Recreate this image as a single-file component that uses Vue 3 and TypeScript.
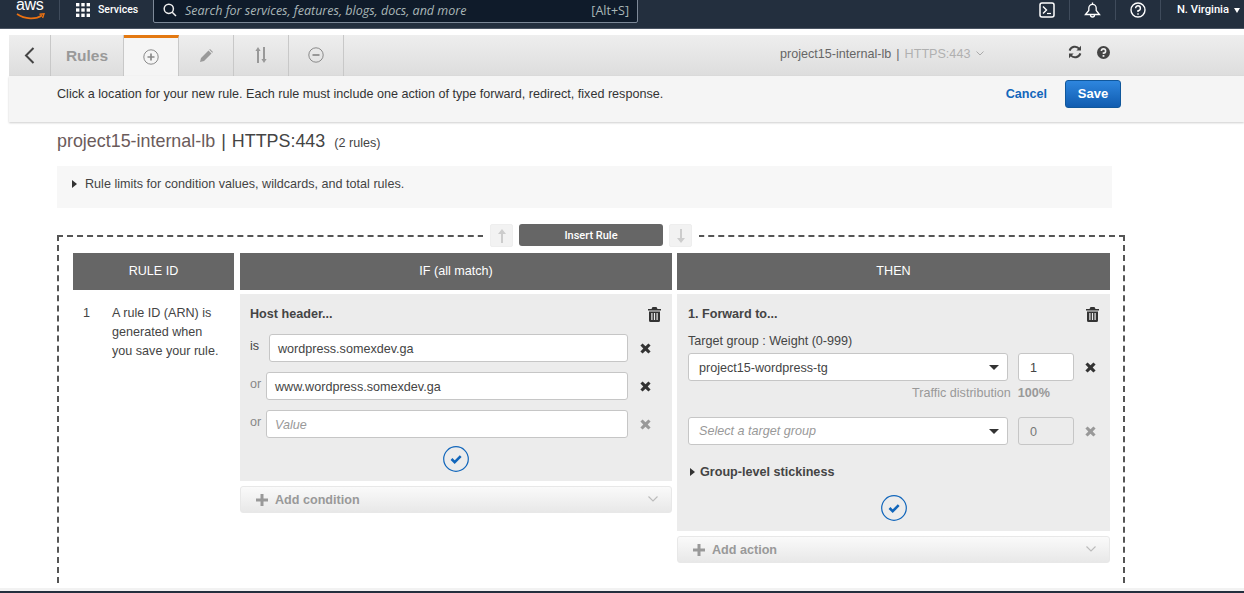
<script setup lang="ts">
const rows = [
  { label: 'is', value: 'wordpress.somexdev.ga', first: true, empty: false },
  { label: 'or', value: 'www.wordpress.somexdev.ga', first: false, empty: false },
  { label: 'or', value: 'Value', first: false, empty: true }
];
</script>

<template>
  <div class="page">
    <header class="nav">
      <div class="logo">
        <span class="logo-text">aws</span>
        <svg class="smile" width="30" height="7" viewBox="0 0 30 7"><path d="M1 1C9 6.5 20 6.5 26 2.5" fill="none" stroke="#ec7211" stroke-width="1.7" /><path d="M23.5 1.2L28 .8 26.6 5" fill="none" stroke="#ec7211" stroke-width="1.4" /></svg>
      </div>
      <div class="nav-sep sep-logo"></div>
      <svg class="grid-icon" width="14" height="14" viewBox="0 0 14 14" fill="#fff">
        <rect x="0" y="0" width="3.4" height="3.4" /><rect x="5.3" y="0" width="3.4" height="3.4" /><rect x="10.6" y="0" width="3.4" height="3.4" />
        <rect x="0" y="5.3" width="3.4" height="3.4" /><rect x="5.3" y="5.3" width="3.4" height="3.4" /><rect x="10.6" y="5.3" width="3.4" height="3.4" />
        <rect x="0" y="10.6" width="3.4" height="3.4" /><rect x="5.3" y="10.6" width="3.4" height="3.4" /><rect x="10.6" y="10.6" width="3.4" height="3.4" />
      </svg>
      <span class="services">Services</span>
      <div class="search">
        <svg width="14" height="14" viewBox="0 0 14 14" fill="none" stroke="#eee" stroke-width="1.5"><circle cx="5.8" cy="5.8" r="4.6" /><path d="M9.2 9.2L13 13" /></svg>
        <span class="search-text">Search for services, features, blogs, docs, and more</span>
        <span class="search-key">[Alt+S]</span>
      </div>
      <div class="nav-right">
        <svg class="nav-icon" width="16" height="16" viewBox="0 0 16 16" fill="none" stroke="#fff"><rect x="1" y="1" width="14" height="14" rx="2" stroke-width="1.5" /><path d="M4 4.5L7.5 8 4 11.5" stroke-width="1.4" /><path d="M8 11.5h4" stroke-width="1.2" /></svg>
        <div class="nav-sep"></div>
        <svg class="nav-icon" width="17" height="17" viewBox="0 0 17 17" fill="none" stroke="#fff" stroke-width="1.3"><path d="M1.5 12.5L4.8 8.5V6a3.7 3.7 0 0 1 7.4 0v2.5l3.3 4z" /><path d="M6.5 13a2 2 0 0 0 4 0" /><path d="M8.5 .5v2" /></svg>
        <div class="nav-sep"></div>
        <svg class="nav-icon" width="16" height="16" viewBox="0 0 16 16" fill="none" stroke="#fff" stroke-width="1.4"><circle cx="8" cy="8" r="7" /><path d="M5.6 6.2A2.4 2.4 0 1 1 8 8.6v1.4" /><path d="M8 11.2v1.5" /></svg>
        <div class="nav-sep"></div>
        <span class="region">N. Virginia</span>
        <span class="region-caret"></span>
      </div>
    </header>

    <div class="top-gap"></div>

    <div class="toolbar">
      <button class="back">
        <svg width="11" height="17" viewBox="0 0 11 17" fill="none" stroke="#444" stroke-width="2"><path d="M9.5 1L2 8.5 9.5 16" /></svg>
      </button>
      <div class="tab-rules">Rules</div>
      <div class="tab active">
        <svg width="16" height="16" viewBox="0 0 16 16" fill="none" stroke="#8a8a8a" stroke-width="1"><circle cx="8" cy="8" r="7.2" /><path d="M8 4.5v7M4.5 8h7" stroke-width="1.7" /></svg>
      </div>
      <div class="tab">
        <svg width="13" height="13" viewBox="0 0 13 13" fill="#999"><path d="M0 13l1-4L8.5 1.5l3 3L4 12zM9.3.7l.7-.7 3 3-.7.7z" /></svg>
      </div>
      <div class="tab">
        <svg width="12" height="16" viewBox="0 0 12 16" fill="#999"><path d="M3 0L.4 4H2v12h2V4h1.6zM9 16l2.6-4H10V0H8v12H6.4z" /></svg>
      </div>
      <div class="tab">
        <svg width="16" height="16" viewBox="0 0 16 16" fill="none" stroke="#8a8a8a" stroke-width="1"><circle cx="8" cy="8" r="7.2" /><path d="M4.5 8h7" stroke-width="1.7" /></svg>
      </div>
      <div class="lb-name">
        <span>project15-internal-lb</span><span class="lb-bar">|</span><span class="lb-port">HTTPS:443</span>
        <svg width="8" height="5" viewBox="0 0 8 5" fill="none" stroke="#aaa"><path d="M.5 .5L4 4 7.5 .5" /></svg>
      </div>
      <svg class="refresh" width="14" height="14" viewBox="0 0 14 14" fill="none" stroke="#444" stroke-width="2"><path d="M1.6 5.6A5.6 5.6 0 0 1 11.4 4" /><path d="M12.4 8.4A5.6 5.6 0 0 1 2.6 10" /><path d="M13 .8v4.6H8.4z" fill="#444" stroke="none" /><path d="M1 13.2V8.6h4.6z" fill="#444" stroke="none" /></svg>
      <svg class="help" width="13" height="13" viewBox="0 0 13 13"><circle cx="6.5" cy="6.5" r="6.5" fill="#444" /><path d="M4.4 5a2.1 2.1 0 1 1 2.1 2.1v1" fill="none" stroke="#eee" stroke-width="1.6" /><rect x="5.6" y="9" width="1.8" height="1.8" fill="#eee" /></svg>
    </div>

    <div class="subbar">
      <span class="hint">Click a location for your new rule. Each rule must include one action of type forward, redirect, fixed response.</span>
      <a class="cancel">Cancel</a>
      <button class="save">Save</button>
    </div>

    <main class="main">
      <h2 class="title">project15-internal-lb<span class="title-bar">|</span><span class="title-port">HTTPS:443</span><small>(2 rules)</small></h2>

      <div class="limits"><span class="caret-right"></span>Rule limits for condition values, wildcards, and total rules.</div>

      <div class="rule-box">
        <div class="insert">
          <button class="arrow-btn">
            <svg width="10" height="14" viewBox="0 0 10 14" fill="#ccc"><path d="M5 0L9 5H6v9H4V5H1z" /></svg>
          </button>
          <div class="insert-btn">Insert Rule</div>
          <button class="arrow-btn">
            <svg width="10" height="14" viewBox="0 0 10 14" fill="#ccc"><path d="M5 14L1 9h3V0h2v9h3z" /></svg>
          </button>
        </div>

        <div class="rule-grid">
          <div class="col-head id-head">RULE ID</div>
          <div class="col-head">IF (all match)</div>
          <div class="col-head">THEN</div>

          <div class="id-cell">
            <span class="id-num">1</span>
            <span class="id-text">A rule ID (ARN) is generated when you save your rule.</span>
          </div>

          <div>
            <section class="panel if-panel">
              <div class="panel-head">
                <span>Host header...</span>
                <svg class="trash" width="13" height="15" viewBox="0 0 13 15" fill="#333"><path d="M4.5 0h4l1 2H13v1.6H0V2h3.500zM1 4.500h11V13.500a1.500 1.500 0 0 1-1.500 1.500h-8A1.500 1.500 0 0 1 1 13.500zM3.300 6v7h1.200V6zM5.900 6v7h1.200V6zM8.500 6v7h1.200V6z" fill-rule="evenodd" /></svg>
              </div>
              <div v-for="row in rows" :key="row.value" class="cond-row" :class="{ first: row.first }">
                <span class="cond-label" :class="{ dim: !row.first }">{{ row.label }}</span>
                <div class="input" :class="{ placeholder: row.empty }">{{ row.value }}</div>
                <svg class="remove" :class="{ faint: row.empty }" width="11" height="11" viewBox="0 0 11 11"><path d="M2.600 .4L5.500 3.300 8.400 .4 10.600 2.600 7.700 5.500 10.600 8.400 8.400 10.600 5.500 7.700 2.600 10.600 .4 8.400 3.300 5.500 .4 2.600z" /></svg>
              </div>
              <div class="check-wrap">
                <svg width="26" height="26" viewBox="0 0 26 26" fill="none"><circle cx="13" cy="13" r="12.300" stroke="#1166bb" stroke-width="1.200" /><path d="M8.500 13l3.200 3.200 6-6" stroke="#1166bb" stroke-width="2.600" /></svg>
              </div>
            </section>
            <div class="add-bar">
              <svg width="12" height="12" viewBox="0 0 12 12" fill="#999"><path d="M4.500 0h3v4.500H12v3H7.500V12h-3V7.500H0v-3h4.500z" /></svg>
              <span>Add condition</span>
              <svg class="add-chevron" width="10" height="6" viewBox="0 0 10 6" fill="none" stroke="#bbb" stroke-width="1.100"><path d="M.5 .5L5 5 9.500 .5" /></svg>
            </div>
          </div>

          <div>
            <section class="panel then-panel">
              <div class="panel-head">
                <span>1. Forward to...</span>
                <svg class="trash" width="13" height="15" viewBox="0 0 13 15" fill="#333"><path d="M4.500 0h4l1 2H13v1.600H0V2h3.500zM1 4.500h11V13.500a1.500 1.500 0 0 1-1.500 1.500h-8A1.500 1.500 0 0 1 1 13.500zM3.300 6v7h1.200V6zM5.900 6v7h1.200V6zM8.500 6v7h1.200V6z" fill-rule="evenodd" /></svg>
              </div>
              <div class="tg-label">Target group : Weight (0-999)</div>
              <div class="tg-row">
                <div class="select">project15-wordpress-tg<span class="select-caret"></span></div>
                <div class="weight">1</div>
                <svg class="remove" width="11" height="11" viewBox="0 0 11 11"><path d="M2.600 .4L5.500 3.300 8.400 .4 10.600 2.600 7.700 5.500 10.600 8.400 8.400 10.600 5.500 7.700 2.600 10.600 .4 8.400 3.300 5.500 .4 2.600z" /></svg>
              </div>
              <div class="traffic"><span>Traffic distribution</span><b>100%</b></div>
              <div class="tg-row second">
                <div class="select placeholder">Select a target group<span class="select-caret"></span></div>
                <div class="weight off">0</div>
                <svg class="remove faint" width="11" height="11" viewBox="0 0 11 11"><path d="M2.600 .4L5.500 3.300 8.400 .4 10.600 2.600 7.700 5.500 10.600 8.400 8.400 10.600 5.500 7.700 2.600 10.600 .4 8.400 3.300 5.500 .4 2.600z" /></svg>
              </div>
              <div class="stickiness"><span class="caret-right dark"></span>Group-level stickiness</div>
              <div class="check-wrap then-check">
                <svg width="26" height="26" viewBox="0 0 26 26" fill="none"><circle cx="13" cy="13" r="12.300" stroke="#1166bb" stroke-width="1.200" /><path d="M8.500 13l3.200 3.200 6-6" stroke="#1166bb" stroke-width="2.600" /></svg>
              </div>
            </section>
            <div class="add-bar">
              <svg width="12" height="12" viewBox="0 0 12 12" fill="#999"><path d="M4.500 0h3v4.500H12v3H7.500V12h-3V7.500H0v-3h4.500z" /></svg>
              <span>Add action</span>
              <svg class="add-chevron" width="10" height="6" viewBox="0 0 10 6" fill="none" stroke="#bbb" stroke-width="1.100"><path d="M.5 .5L5 5 9.500 .5" /></svg>
            </div>
          </div>
        </div>
      </div>
    </main>

    <footer class="foot"></footer>
  </div>
</template>

<style>
html, body {
  margin: 0;
  background: #fff;
  overflow: hidden;
}
</style>

<style scoped>
.page {
  height: 593px;
  display: flex;
  flex-direction: column;
  overflow: hidden;
  font-family: "Liberation Sans", Arial, sans-serif;
  font-size: 12.6px;
  color: #444;
}

/* top nav */
.nav {
  flex: none;
  height: 28px;
  display: flex;
  align-items: flex-start;
  background: #232f3e;
  border-bottom: 1px solid #4b5563;
  color: #fff;
}
.logo {
  width: 30px;
  margin-left: 16px;
  height: 20px;
}
.logo-text {
  display: block;
  font-size: 16px;
  line-height: 10px;
  letter-spacing: -0.4px;
  color: #fff;
}
.smile {
  display: block;
  margin-top: 3px;
}
.nav-sep {
  width: 1px;
  height: 20px;
  background: #3f4b5b;
}
.sep-logo {
  margin-left: 13px;
}
.grid-icon {
  margin: 3px 8px 0 16px;
}
.services {
  font-family: Roboto, sans-serif;
  font-weight: 500;
  font-size: 10.5px;
  line-height: 20px;
  width: 40px;
  white-space: nowrap;
}
.search {
  margin: -1px 0 0 15px;
  width: 485px;
  height: 24px;
  box-sizing: border-box;
  border: 1px solid #7d8998;
  border-radius: 0 0 2px 2px;
  background: #0f1b2a;
  display: flex;
  align-items: center;
  padding: 0 8px 2px 9px;
}
.search-text {
  margin-left: 8px;
  flex: 1;
  font-style: italic;
  font-family: "Open Sans", sans-serif;
  font-size: 12.5px;
  color: #aab7b8;
}
.search-key {
  font-family: "Open Sans", sans-serif;
  font-size: 12.5px;
  color: #aab7b8;
}
.nav-right {
  margin-left: auto;
  display: flex;
  align-items: flex-start;
}
.nav-icon {
  margin: 2px 14px 0;
}
.region {
  font-family: Roboto, sans-serif;
  font-weight: 500;
  font-size: 11.2px;
  line-height: 20px;
  margin-left: 16px;
}
.region-caret {
  margin: 8px 4px 0 5px;
  border-left: 3.5px solid transparent;
  border-right: 3.5px solid transparent;
  border-top: 5px solid #fff;
}
.top-gap {
  flex: none;
  height: 6px;
}

/* toolbar */
.toolbar {
  flex: none;
  height: 41px;
  margin-left: 9px;
  display: flex;
  align-items: center;
  background: linear-gradient(#eeeeee, #dddddd);
}
.back {
  width: 42px;
  height: 41px;
  padding: 0;
  border: none;
  border-right: 1px solid #c8c8c8;
  background: none;
  display: flex;
  align-items: center;
  justify-content: center;
}
.tab-rules {
  width: 70px;
  height: 41px;
  margin-left: 3px;
  padding-right: 3px;
  box-sizing: border-box;
  border-right: 1px solid #c8c8c8;
  font-size: 15.5px;
  font-weight: 700;
  line-height: 41px;
  text-align: center;
  color: #999;
}
.tab {
  width: 55px;
  height: 41px;
  box-sizing: border-box;
  border-right: 1px solid #c8c8c8;
  padding-bottom: 1px;
  display: flex;
  align-items: center;
  justify-content: center;
}
.tab.active {
  background: #f5f5f5;
  border-top: 3px solid #e47911;
}
.lb-name {
  margin: -4px 0 0 436px;
  width: 220px;
  display: flex;
  align-items: center;
  color: #666;
}
.lb-bar {
  margin: 0 5px;
}
.lb-port {
  color: #b0b0b0;
  margin-right: 6px;
}
.refresh {
  margin-left: 68px;
  margin-top: -7px;
}
.help {
  margin-left: 15px;
  margin-top: -7px;
}

/* action bar */
.subbar {
  flex: none;
  height: 46px;
  margin-left: 9px;
  padding: 0 123px 0 48px;
  display: flex;
  align-items: flex-start;
  background: #f5f5f5;
  box-shadow: 0 1px 2px rgba(0, 0, 0, 0.2);
}
.hint {
  flex: 1;
  line-height: 37px;
  color: #333;
}
.cancel {
  line-height: 37px;
  font-weight: 700;
  color: #1166bb;
  margin-right: 18px;
}
.save {
  width: 56px;
  height: 28px;
  margin-top: 4px;
  padding: 0 0 2px;
  border: 1px solid #10579b;
  border-radius: 3px;
  background: linear-gradient(#2e86de, #105cb0);
  color: #fff;
  font-family: inherit;
  font-size: 13px;
  font-weight: 700;
}

/* main */
.main {
  flex: 1;
  min-height: 0;
  overflow: hidden;
  padding: 8px 0 0 57px;
}
.title {
  margin: 0;
  font-size: 17.9px;
  font-weight: 400;
  line-height: 22px;
  color: #6b5b5b;
}
.title-bar {
  margin: 0 6px;
  color: #444;
}
.title-port {
  color: #444;
}
.title small {
  margin-left: 9px;
  font-size: 12.6px;
  color: #444;
}
.limits {
  width: 1055px;
  height: 42px;
  margin-top: 12px;
  box-sizing: border-box;
  padding: 0 0 6px 15px;
  background: #f7f7f7;
  color: #444;
  display: flex;
  align-items: center;
}
.caret-right {
  display: inline-block;
  margin-right: 8px;
  border-top: 4px solid transparent;
  border-bottom: 4px solid transparent;
  border-left: 5px solid #333;
}
.rule-box {
  position: relative;
  width: 1068px;
  box-sizing: border-box;
  margin-top: 27px;
  padding: 16px 0 20px 14px;
  border: 2px dashed #555;
  border-bottom: none;
}
.insert {
  position: absolute;
  top: -13px;
  left: 424px;
  padding: 0 7px;
  background: #fff;
  display: flex;
  gap: 6px;
}
.arrow-btn {
  width: 23px;
  height: 23px;
  padding: 0;
  border: 1px solid #eee;
  border-radius: 2px;
  background: #f2f2f2;
  display: flex;
  align-items: center;
  justify-content: center;
}
.insert-btn {
  width: 144px;
  height: 22px;
  border-radius: 3px;
  background: #666;
  color: #fff;
  font-family: Roboto, sans-serif;
  font-size: 11px;
  font-weight: 500;
  line-height: 23px;
  text-align: center;
}
.rule-grid {
  display: grid;
  grid-template-columns: 162px 432px 433px;
  column-gap: 5px;
  align-items: start;
}
.col-head {
  height: 37px;
  margin-bottom: 4px;
  background: #666;
  color: #fff;
  line-height: 37px;
  text-align: center;
}
.id-head {
  margin-right: 1px;
}
.id-cell {
  display: flex;
  padding: 10px 0 0 10px;
  line-height: 19px;
  color: #444;
}
.id-num {
  width: 29px;
  flex: none;
}
.id-text {
  width: 108px;
}
.panel {
  box-sizing: border-box;
  background: #ececec;
}
.if-panel {
  height: 187px;
  padding: 11px 10px 0;
}
.then-panel {
  height: 237px;
  padding: 11px 10px 0 11px;
}
.panel-head {
  display: flex;
  justify-content: space-between;
  align-items: center;
  height: 18px;
  font-weight: 700;
  color: #444;
}
.trash {
  margin-right: 1px;
}
.cond-row {
  display: flex;
  align-items: center;
  margin-top: 10px;
}
.cond-row.first {
  margin-top: 11px;
}
.cond-label {
  width: 16px;
  flex: none;
  margin-top: -4px;
  color: #444;
}
.cond-label.dim {
  color: #888;
}
.cond-row.first .cond-label {
  width: 19px;
}
.input,
.select,
.weight {
  box-sizing: border-box;
  height: 28px;
  border: 1px solid #c6c6c6;
  border-radius: 3px;
  background: #fff;
  line-height: 28px;
  color: #444;
}
.input {
  flex: 1;
  padding-left: 8px;
  margin-right: 12px;
}
.remove {
  flex: none;
  margin-right: 11px;
  fill: #333;
}
.remove.faint {
  fill: #999;
}
.placeholder {
  font-style: italic;
  color: #999;
}
.check-wrap {
  display: flex;
  justify-content: center;
  margin-top: 8px;
}
.then-check {
  margin-top: 14px;
}
.add-bar {
  position: relative;
  height: 27px;
  margin-top: 5px;
  box-sizing: border-box;
  padding: 0 0 0 15px;
  border: 1px solid #e8e8e8;
  border-radius: 3px;
  background: linear-gradient(#fafafa, #e8e8e8);
  display: flex;
  align-items: center;
  gap: 7px;
  font-size: 12.6px;
  font-weight: 700;
  color: #999;
}
.add-chevron {
  position: absolute;
  right: 13px;
  top: 9px;
}
.tg-label {
  margin-top: 10px;
  line-height: 16px;
  color: #444;
}
.tg-row {
  display: flex;
  align-items: center;
  margin-top: 4px;
}
.tg-row.second {
  margin-top: 16px;
}
.select {
  position: relative;
  flex: none;
  width: 320px;
  padding-left: 10px;
}
.select.placeholder {
  line-height: 26px;
}
.select-caret {
  position: absolute;
  right: 8px;
  top: 11px;
  border-left: 5px solid transparent;
  border-right: 5px solid transparent;
  border-top: 5px solid #333;
}
.weight {
  flex: none;
  width: 56px;
  margin: 0 11px 0 10px;
  padding-left: 11px;
}
.weight.off {
  background: #ececec;
  color: #777;
}
.traffic {
  display: flex;
  justify-content: flex-start;
  margin: 4px 0 0 224px;
  line-height: 16px;
  color: #999;
}
.traffic b {
  margin-left: 7px;
}
.stickiness {
  margin: 18px 0 0 2px;
  font-size: 12.6px;
  font-weight: 700;
  line-height: 18px;
  color: #444;
  display: flex;
  align-items: center;
}
.stickiness .caret-right {
  margin-right: 5px;
}

.foot {
  flex: none;
  height: 5px;
  background: #f2f2f2;
  border-bottom: 2px solid #232f3e;
  box-sizing: border-box;
}
</style>
